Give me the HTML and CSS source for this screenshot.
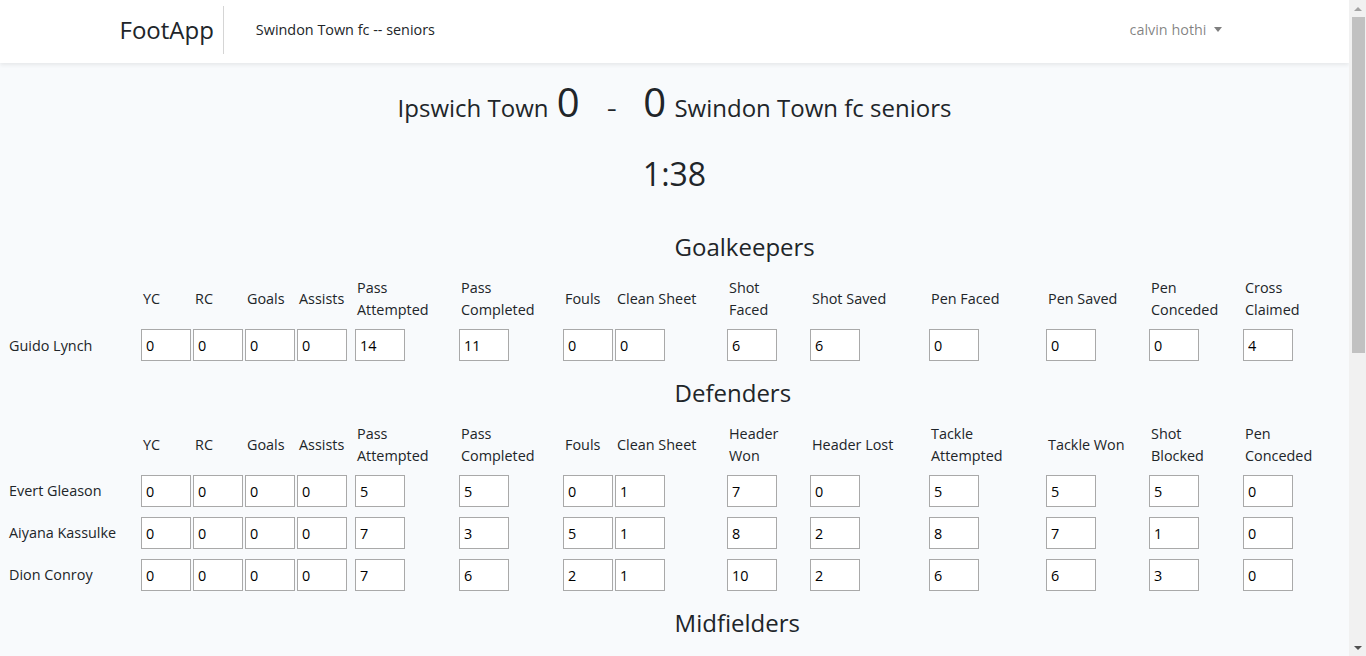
FILE: index.html
```html
<!DOCTYPE html>
<html lang="en">
<head>
<meta charset="utf-8">
<title>FootApp</title>
<link rel="stylesheet" href="styles.css">
</head>
<body>
<nav class="navbar">
  <div class="nav-inner">
    <a class="brand" href="#">FootApp</a>
    <span class="divider"></span>
    <span class="team">Swindon Town fc -- seniors</span>
    <a class="user" href="#">calvin hothi<span class="caret"></span></a>
  </div>
</nav>

<main class="match">
  <div class="score">Ipswich Town <span class="goal">0</span><span class="dash">-</span><span class="goal">0</span> Swindon Town fc seniors</div>
  <div class="clock">1:38</div>

  <table class="stats">
    <colgroup>
      <col class="w132"><col class="w52"><col class="w52"><col class="w52"><col class="w58">
      <col class="w104"><col class="w104"><col class="w52"><col class="w112"><col class="w83">
      <col class="w119"><col class="w117"><col class="w103"><col class="w94"><col class="w99">
    </colgroup>

    <tbody>
      <tr class="section"><th colspan="15"><h3>Goalkeepers</h3></th></tr>
      <tr class="labels">
        <th></th><th>YC</th><th>RC</th><th>Goals</th><th>Assists</th><th>Pass<br>Attempted</th><th>Pass<br>Completed</th><th>Fouls</th><th>Clean Sheet</th><th>Shot<br>Faced</th><th>Shot Saved</th><th>Pen Faced</th><th>Pen Saved</th><th>Pen<br>Conceded</th><th>Cross<br>Claimed</th>
      </tr>
      <tr class="player">
        <td>Guido Lynch</td>
        <td><input value="0"></td><td><input value="0"></td><td><input value="0"></td><td><input value="0"></td><td><input value="14"></td><td><input value="11"></td><td><input value="0"></td><td><input value="0"></td><td><input value="6"></td><td><input value="6"></td><td><input value="0"></td><td><input value="0"></td><td><input value="0"></td><td><input value="4"></td>
      </tr>
    </tbody>

    <tbody>
      <tr class="section"><th colspan="15"><h3>Defenders</h3></th></tr>
      <tr class="labels">
        <th></th><th>YC</th><th>RC</th><th>Goals</th><th>Assists</th><th>Pass<br>Attempted</th><th>Pass<br>Completed</th><th>Fouls</th><th>Clean Sheet</th><th>Header<br>Won</th><th>Header Lost</th><th>Tackle<br>Attempted</th><th>Tackle Won</th><th>Shot<br>Blocked</th><th>Pen<br>Conceded</th>
      </tr>
      <tr class="player">
        <td>Evert Gleason</td>
        <td><input value="0"></td><td><input value="0"></td><td><input value="0"></td><td><input value="0"></td><td><input value="5"></td><td><input value="5"></td><td><input value="0"></td><td><input value="1"></td><td><input value="7"></td><td><input value="0"></td><td><input value="5"></td><td><input value="5"></td><td><input value="5"></td><td><input value="0"></td>
      </tr>
      <tr class="player">
        <td>Aiyana Kassulke</td>
        <td><input value="0"></td><td><input value="0"></td><td><input value="0"></td><td><input value="0"></td><td><input value="7"></td><td><input value="3"></td><td><input value="5"></td><td><input value="1"></td><td><input value="8"></td><td><input value="2"></td><td><input value="8"></td><td><input value="7"></td><td><input value="1"></td><td><input value="0"></td>
      </tr>
      <tr class="player">
        <td>Dion Conroy</td>
        <td><input value="0"></td><td><input value="0"></td><td><input value="0"></td><td><input value="0"></td><td><input value="7"></td><td><input value="6"></td><td><input value="2"></td><td><input value="1"></td><td><input value="10"></td><td><input value="2"></td><td><input value="6"></td><td><input value="6"></td><td><input value="3"></td><td><input value="0"></td>
      </tr>
    </tbody>

    <tbody>
      <tr class="section"><th colspan="15"><h3>Midfielders</h3></th></tr>
      <tr class="labels">
        <th></th><th>YC</th><th>RC</th><th>Goals</th><th>Assists</th><th>Pass<br>Attempted</th><th>Pass<br>Completed</th><th>Fouls</th><th>Shot<br>On</th><th>Shot<br>Off</th><th>Key Passes</th><th>Tackle<br>Attempted</th><th>Tackle Won</th><th>Dribble<br>Attempted</th><th>Dribble<br>Won</th>
      </tr>
      <tr class="player">
        <td>Kian Hermiston</td>
        <td><input value="0"></td><td><input value="0"></td><td><input value="0"></td><td><input value="0"></td><td><input value="12"></td><td><input value="9"></td><td><input value="1"></td><td><input value="0"></td><td><input value="1"></td><td><input value="2"></td><td><input value="4"></td><td><input value="3"></td><td><input value="2"></td><td><input value="1"></td>
      </tr>
      <tr class="player">
        <td>Lela Schmeler</td>
        <td><input value="0"></td><td><input value="0"></td><td><input value="0"></td><td><input value="0"></td><td><input value="9"></td><td><input value="7"></td><td><input value="0"></td><td><input value="1"></td><td><input value="0"></td><td><input value="1"></td><td><input value="3"></td><td><input value="2"></td><td><input value="1"></td><td><input value="1"></td>
      </tr>
      <tr class="player">
        <td>Otho Beier</td>
        <td><input value="0"></td><td><input value="0"></td><td><input value="0"></td><td><input value="0"></td><td><input value="10"></td><td><input value="8"></td><td><input value="2"></td><td><input value="0"></td><td><input value="0"></td><td><input value="3"></td><td><input value="5"></td><td><input value="4"></td><td><input value="0"></td><td><input value="0"></td>
      </tr>
      <tr class="player">
        <td>Maia Rutherford</td>
        <td><input value="0"></td><td><input value="0"></td><td><input value="0"></td><td><input value="0"></td><td><input value="8"></td><td><input value="6"></td><td><input value="1"></td><td><input value="1"></td><td><input value="1"></td><td><input value="1"></td><td><input value="2"></td><td><input value="2"></td><td><input value="3"></td><td><input value="2"></td>
      </tr>
    </tbody>

    <tbody>
      <tr class="section"><th colspan="15"><h3>Forwards</h3></th></tr>
      <tr class="labels">
        <th></th><th>YC</th><th>RC</th><th>Goals</th><th>Assists</th><th>Pass<br>Attempted</th><th>Pass<br>Completed</th><th>Fouls</th><th>Shot<br>On</th><th>Shot<br>Off</th><th>Offsides</th><th>Header<br>Won</th><th>Header Lost</th><th>Dribble<br>Attempted</th><th>Dribble<br>Won</th>
      </tr>
      <tr class="player">
        <td>Javon Keeling</td>
        <td><input value="0"></td><td><input value="0"></td><td><input value="0"></td><td><input value="0"></td><td><input value="6"></td><td><input value="4"></td><td><input value="1"></td><td><input value="2"></td><td><input value="1"></td><td><input value="1"></td><td><input value="3"></td><td><input value="1"></td><td><input value="4"></td><td><input value="2"></td>
      </tr>
      <tr class="player">
        <td>Reese Dach</td>
        <td><input value="0"></td><td><input value="0"></td><td><input value="0"></td><td><input value="0"></td><td><input value="5"></td><td><input value="3"></td><td><input value="0"></td><td><input value="0"></td><td><input value="2"></td><td><input value="0"></td><td><input value="2"></td><td><input value="2"></td><td><input value="3"></td><td><input value="1"></td>
      </tr>
    </tbody>
  </table>
</main>

<div class="scrollbar" aria-hidden="true">
  <span class="sb-btn"><span class="sb-up"></span></span>
  <span class="sb-thumb"></span>
  <span class="sb-track"></span>
  <span class="sb-btn"><span class="sb-down"></span></span>
</div>
</body>
</html>
```

FILE: styles.css
```css
* { box-sizing: border-box; }

html, body {
  margin: 0;
  padding: 0;
}

html {
  background: #f8fafc;
}

body {
  margin-right: 17px;
  background: #f8fafc;
  color: #212529;
  font-family: "Open Sans", "Noto Sans", "Liberation Sans", sans-serif;
  font-size: 14.4px;
  line-height: 1.6;
}

/* ---------- navbar ---------- */
.navbar {
  height: 63px;
  background: #fff;
  box-shadow: 0 2px 4px rgba(0, 0, 0, 0.075);
}

.nav-inner {
  width: 1140px;
  height: 100%;
  margin: 0 auto;
  padding: 0 15px 3px;
  display: flex;
  align-items: center;
}

.brand {
  font-size: 24px;
  line-height: 30px;
  color: #212529;
  text-decoration: none;
  margin-right: 9px;
  margin-bottom: 1px;
}

.divider {
  width: 1px;
  height: 48px;
  background: #d5d5d5;
}

.team {
  margin-left: 32px;
  line-height: 22px;
}

.user {
  margin-left: auto;
  padding: 0 8px;
  line-height: 22px;
  color: rgba(0, 0, 0, 0.5);
  text-decoration: none;
}

.caret {
  display: inline-block;
  margin-left: 7px;
  vertical-align: 3px;
  border-top: 5px solid rgba(0, 0, 0, 0.5);
  border-left: 4.5px solid transparent;
  border-right: 4.5px solid transparent;
}

/* ---------- score ---------- */
.match {
  padding-top: 15px;
}

.score {
  text-align: center;
  font-size: 24px;
  line-height: 48px;
  margin-bottom: 23px;
}

.goal {
  font-size: 40px;
  margin: 0 2px;
}

.dash {
  display: inline-block;
  margin: 0 26px;
  transform: scaleX(1.3);
}

.clock {
  text-align: center;
  font-size: 32px;
  line-height: 38.4px;
  margin-bottom: 27px;
}

/* ---------- table ---------- */
.stats {
  width: calc(100% - 16px);
  margin: 0 8px 60px;
  border-collapse: collapse;
  table-layout: fixed;
}

.w52 { width: 52px; }
.w58 { width: 58px; }
.w83 { width: 83px; }
.w94 { width: 94px; }
.w99 { width: 99px; }
.w103 { width: 103px; }
.w104 { width: 104px; }
.w112 { width: 112px; }
.w117 { width: 117px; }
.w119 { width: 119px; }
.w132 { width: 132px; }

.section th {
  padding: 13px 0 6px 50%;
  text-align: left;
  font-weight: 400;
  vertical-align: top;
}

.section h3 {
  margin: 0;
  font-size: 24px;
  font-weight: 400;
  line-height: 28.8px;
}

.labels th {
  height: 56px;
  padding: 9px 0 3px 3px;
  text-align: left;
  vertical-align: middle;
  font-weight: 400;
  line-height: 22px;
  white-space: nowrap;
}

.player td {
  height: 42px;
  padding: 5px 1px;
  vertical-align: middle;
  white-space: nowrap;
}

.player input {
  display: block;
  width: 50px;
  height: 32px;
  margin: 0;
  padding: 0 4px;
  border: 1px solid #a9a9a9;
  background: #fff;
  color: #000;
  font-family: inherit;
  font-size: 14.4px;
}

/* ---------- window scrollbar (overlay) ---------- */
.scrollbar {
  position: fixed;
  top: 0;
  right: 0;
  bottom: 0;
  width: 17px;
  background: #f1f1f1;
  display: flex;
  flex-direction: column;
  align-items: center;
}

.sb-btn {
  height: 17px;
  width: 17px;
  display: flex;
  align-items: center;
  justify-content: center;
}

.sb-up {
  border-bottom: 4px solid #a3a3a3;
  border-left: 4px solid transparent;
  border-right: 4px solid transparent;
}

.sb-down {
  border-top: 4px solid #505050;
  border-left: 4px solid transparent;
  border-right: 4px solid transparent;
}

.sb-thumb {
  width: 13px;
  height: 336px;
  margin-left: 1px;
  background: #c1c1c1;
}

.sb-track {
  flex: 1;
}
```
